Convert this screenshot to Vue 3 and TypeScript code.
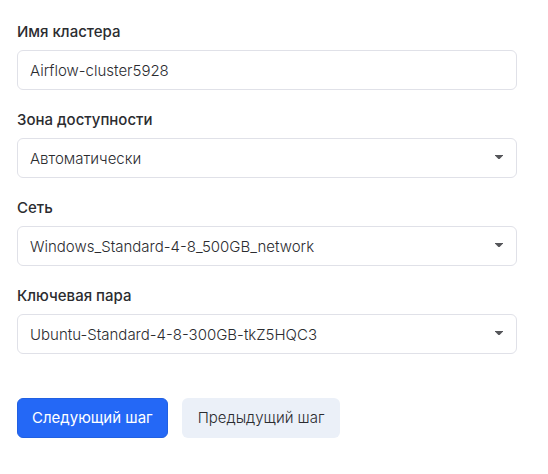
<script setup lang="ts">
import { reactive } from 'vue'

interface SelectField {
  id: 'zone' | 'network' | 'keyPair'
  label: string
  options: string[]
}

const form = reactive({
  name: 'Airflow-cluster5928',
  zone: 'Автоматически',
  network: 'Windows_Standard-4-8_500GB_network',
  keyPair: 'Ubuntu-Standard-4-8-300GB-tkZ5HQC3',
})

const selects: SelectField[] = [
  { id: 'zone', label: 'Зона доступности', options: ['Автоматически'] },
  { id: 'network', label: 'Сеть', options: ['Windows_Standard-4-8_500GB_network'] },
  { id: 'keyPair', label: 'Ключевая пара', options: ['Ubuntu-Standard-4-8-300GB-tkZ5HQC3'] },
]
</script>

<template>
  <form class="cluster-form" @submit.prevent>
    <div class="field">
      <label class="label" for="name">Имя кластера</label>
      <input id="name" v-model="form.name" class="control" type="text" />
    </div>
    <div v-for="field in selects" :key="field.id" class="field">
      <label class="label" :for="field.id">{{ field.label }}</label>
      <div class="select-wrap">
        <select :id="field.id" v-model="form[field.id]" class="control select">
          <option v-for="option in field.options" :key="option" :value="option">{{ option }}</option>
        </select>
        <svg class="caret" viewBox="0 0 8 4" aria-hidden="true"><path d="M0 0h8v.6L4.6 4H3.4L0 .6z" /></svg>
      </div>
    </div>
    <div class="actions">
      <button class="button primary" type="submit">Следующий шаг</button>
      <button class="button secondary" type="button">Предыдущий шаг</button>
    </div>
  </form>
</template>

<style>
body {
  margin: 0;
  background: #fff;
}
</style>

<style scoped>
.cluster-form {
  display: flex;
  flex-direction: column;
  gap: 20px;
  padding: 22px 31px 32px 17px;
  color: #2b2c30;
  font-family: Inter, sans-serif;
  font-size: 15px;
  line-height: 20px;
}

.field {
  display: flex;
  flex-direction: column;
  gap: 8px;
}

.label {
  font-weight: 500;
  line-height: 20px;
}

.select-wrap {
  display: grid;
  align-items: center;
}

.select-wrap > * {
  grid-area: 1 / 1;
}

.control {
  box-sizing: border-box;
  width: 100%;
  height: 40px;
  margin: 0;
  padding: 0 12px;
  border: 1px solid #e0e1e8;
  border-radius: 6px;
  outline: none;
  background: #fff;
  color: inherit;
  font: inherit;
  font-weight: 300;
  appearance: none;
}

.select {
  padding-top: 2px;
}

.control:focus {
  border-color: #2468f6;
}

.caret {
  justify-self: end;
  width: 8px;
  height: 4px;
  margin-right: 14px;
  margin-bottom: 2px;
  fill: #55565a;
  pointer-events: none;
}

.actions {
  display: flex;
  gap: 14px;
  padding-top: 24px;
}

.button {
  height: 40px;
  padding: 0 16px;
  border: 0;
  border-radius: 6px;
  color: inherit;
  font: inherit;
  cursor: pointer;
}

.primary {
  border: 1px solid #2160e2;
  padding: 0 14px;
  background: #2468f6;
  color: #fff;
}

.secondary {
  background: #ebf0f8;
  font-weight: 300;
}
</style>
